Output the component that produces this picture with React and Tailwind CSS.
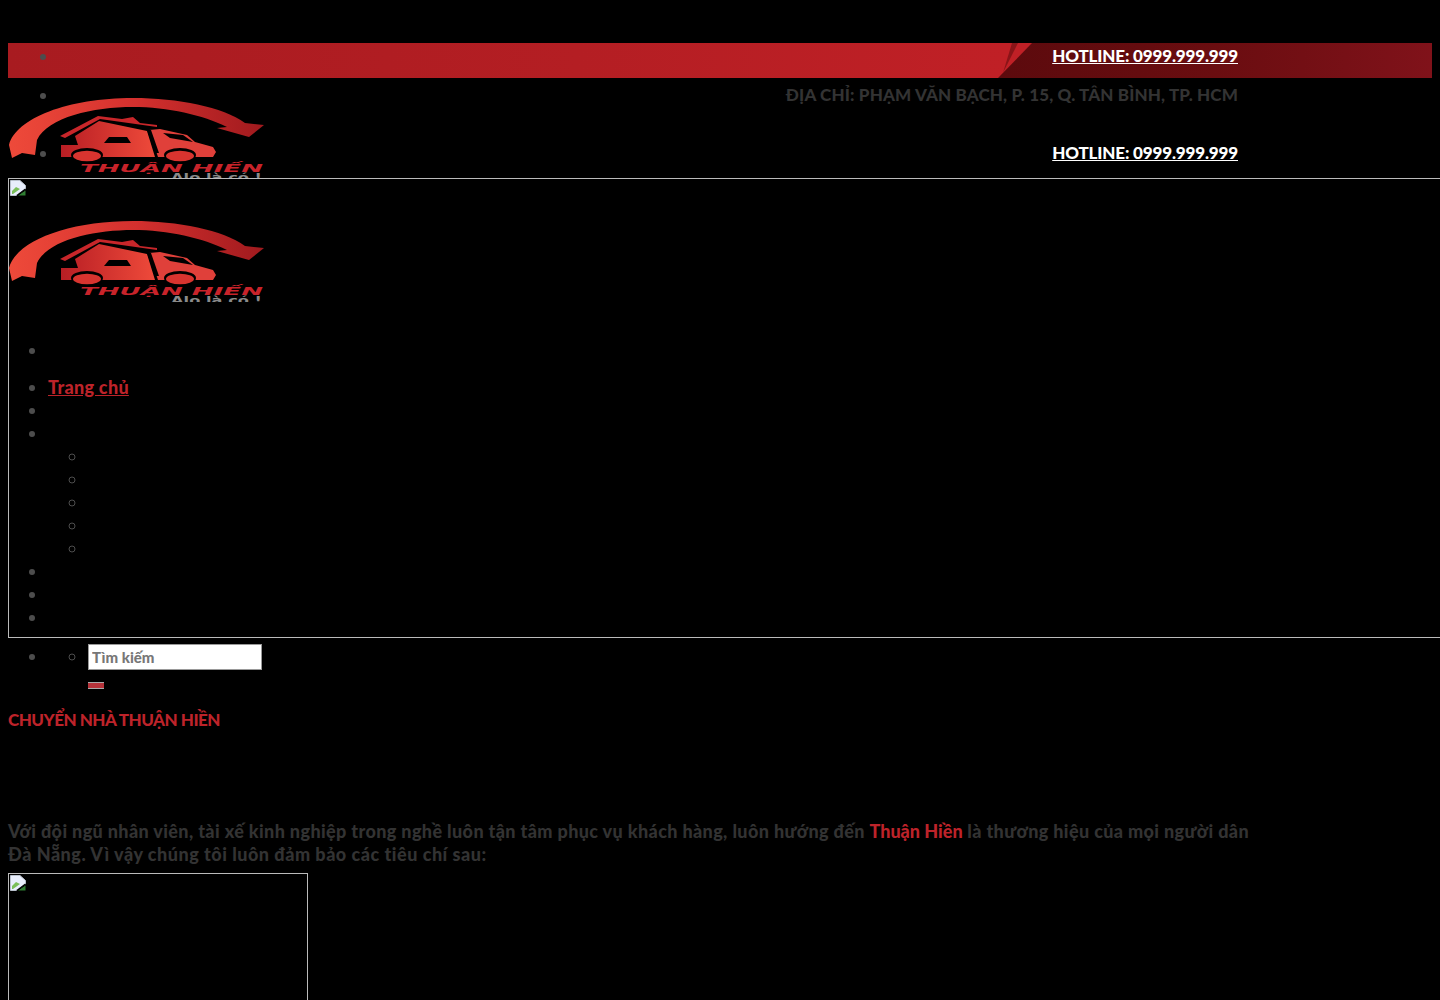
import React from "react";

function Logo() {
  return (
    <svg width="256" height="82" viewBox="0 0 256 82" className="block overflow-hidden">
      <defs>
        <linearGradient id="arcG" x1="0" x2="1" y1="0" y2="0">
          <stop offset="0" stopColor="#ee4a3a" />
          <stop offset="0.5" stopColor="#d4302e" />
          <stop offset="1" stopColor="#a01a1e" />
        </linearGradient>
        <linearGradient id="carG" x1="0" x2="1" y1="0" y2="0">
          <stop offset="0" stopColor="#b81e24" />
          <stop offset="1" stopColor="#ee4a3a" />
        </linearGradient>
      </defs>
      <path d="M4 61 L1 48 C8 21 60 1 125 1 C170 1 215 10 237 26 L256 28 L241 40 L209 31 L219 30 C195 18 160 10 125 10 C85 10 40 20 29 43 L27 58 L14 56 Z" fill="url(#arcG)" />
      <path d="M52 39 L90 19 L114 22 L125 20 L132 26 L149 28 L149 30 L92 22 L57 41 Z" fill="#c8262a" />
      <path d="M53 48 L70 48 L67 39 L91 24 L139 34 L147 60 L53 60 Z" fill="url(#carG)" />
      <path d="M141 33 L152 32 L179 38 L187 45 L205 50 L208 55 L205 60 L150 60 Z" fill="#e0403a" />
      <path d="M96 46 L101 40 L119 40 L123 46 Z" fill="#000" />
      <path d="M155 36 L162 41 L185 45 L175 38 Z" fill="#000" />
      <path d="M139 33 L143 33 L151 56 L147 56 Z" fill="#000" />
      <ellipse cx="79" cy="58" rx="16" ry="7" fill="#000" />
      <ellipse cx="172" cy="58" rx="16" ry="7" fill="#000" />
      <ellipse cx="79" cy="59" rx="14" ry="5.2" fill="#d8342f" />
      <ellipse cx="172" cy="59" rx="14" ry="5.2" fill="#d8342f" />
      <text x="72" y="75" textLength="183" lengthAdjust="spacingAndGlyphs" fontFamily="'DejaVu Sans', sans-serif" fontWeight="700" fontStyle="italic" fontSize="10" fill="#c8232a">THUẬN HIỀN</text>
      <text x="163" y="84" textLength="91" lengthAdjust="spacingAndGlyphs" fontFamily="'DejaVu Sans', sans-serif" fontWeight="700" fontSize="11" fill="#8a8a8a">Alo là có !</text>
    </svg>
  );
}

function Broken() {
  return (
    <svg width="16" height="16" viewBox="0 0 16 16" className="block">
      <path d="M0.5 0.5 H10 L15.5 5.5 V9 L6 15.5 H0.5 Z" fill="#e8eefc" stroke="#b8c0cc" />
      <path d="M2 11 L6 7 L10 9 L3 14 H2 Z" fill="#7bbf5a" />
      <path d="M15.5 10.5 V15.5 H8 Z" fill="#2f7d32" />
      <path d="M7 15.5 L15.5 9" stroke="#000" strokeWidth="1.2" />
    </svg>
  );
}

export default function App() {
  return (
    <div className="h-[1000px] w-full overflow-hidden bg-black font-['Lato','Liberation_Sans',sans-serif] text-[18px] leading-[23px] font-bold text-[#333] marker:text-[#4d4d4d]">
      <div className="px-2 pt-[43px]">
        <div className="relative">
          <div className="absolute left-0 top-[54px]">
            <Logo />
          </div>
          <ul className="relative z-10 h-[35px] list-disc overflow-hidden bg-[linear-gradient(90deg,#a81b20_0%,#b41e23_40%,#c02026_70%)] pl-[50px] pr-[194px] pt-px text-right">
            <div className="absolute inset-y-0 left-[990px] right-0 bg-[linear-gradient(90deg,#5c0a0d_0%,#6a0d10_50%,#80121a_100%)] [clip-path:polygon(34px_0,100%_0,100%_100%,0_100%)]" />
            <div className="absolute inset-y-0 left-[995px] w-[15px] bg-[#8a1418] [clip-path:polygon(9px_0,15px_0,0_85%)]" />
            <li className="relative text-[17px] font-black tracking-[-0.15px] text-white underline">HOTLINE: 0999.999.999</li>
          </ul>
          <ul className="relative z-10 mt-[5px] list-disc pl-[50px] pr-[194px] text-right">
            <li className="text-[17px] font-black tracking-[0.15px]">ĐỊA CHỈ: PHẠM VĂN BẠCH, P. 15, Q. TÂN BÌNH, TP. HCM</li>
          </ul>
          <ul className="relative z-10 mt-[35px] list-disc pl-[50px] pr-[194px] text-right">
            <li className="text-[17px] font-black tracking-[-0.15px] text-white underline">HOTLINE: 0999.999.999</li>
          </ul>
        </div>

        <div className="relative z-20 mt-[14px] h-[460px] w-[1500px] border border-[#bbb] bg-black pl-px pt-px">
          <Broken />
          <div className="mt-[24px] -ml-0.5">
            <Logo />
          </div>
          <ul className="mt-[37px] list-disc pl-[38px]">
            <li className="h-[37px]"></li>
            <li><a className="font-black tracking-[0.3px] text-[#bd232a] underline">Trang chủ</a></li>
            <li className="h-[23px]"></li>
            <li>
              {"\u00a0"}
              <ul className="list-[circle] pl-10">
                <li className="h-[23px]"></li>
                <li className="h-[23px]"></li>
                <li className="h-[23px]"></li>
                <li className="h-[23px]"></li>
                <li className="h-[23px]"></li>
              </ul>
            </li>
            <li className="h-[23px]"></li>
            <li className="h-[23px]"></li>
            <li className="h-[23px]"></li>
          </ul>
        </div>

        <ul className="mt-[6px] list-disc pl-10">
          <li>
            <ul className="list-[circle] pl-10">
              <li>
                <input
                  readOnly
                  placeholder="Tìm kiếm"
                  className="block h-[26px] w-[174px] border border-[#999] bg-white px-[3px] text-[15px] font-black text-[#777] placeholder:text-[#777]"
                />
                <div className="mt-3 h-[7px] w-4 border-y border-[#aaa] bg-[#b5333a]" />
              </li>
            </ul>
          </li>
        </ul>

        <h1 className="mt-[19px] text-[17px] leading-[23px] font-black tracking-[-0.5px] text-[#bd232a]">CHUYỂN NHÀ THUẬN HIỀN</h1>

        <p className="mt-[89px] font-black tracking-[0.37px]">
          Với đội ngũ nhân viên, tài xế kinh nghiệp trong nghề luôn tận tâm phục vụ khách hàng, luôn hướng đến{" "}
          <span className="tracking-[0px] text-[#bd232a]">Thuận Hiền</span> là thương hiệu của mọi người dân
          <br />
          <span className="tracking-[0.51px]">Đà Nẵng. Vì vậy chúng tôi luôn đảm bảo các tiêu chí sau:</span>
        </p>

        <div className="mt-[7px] h-[200px] w-[300px] border border-[#bbb] pl-px pt-px">
          <Broken />
        </div>
      </div>
    </div>
  );
}
